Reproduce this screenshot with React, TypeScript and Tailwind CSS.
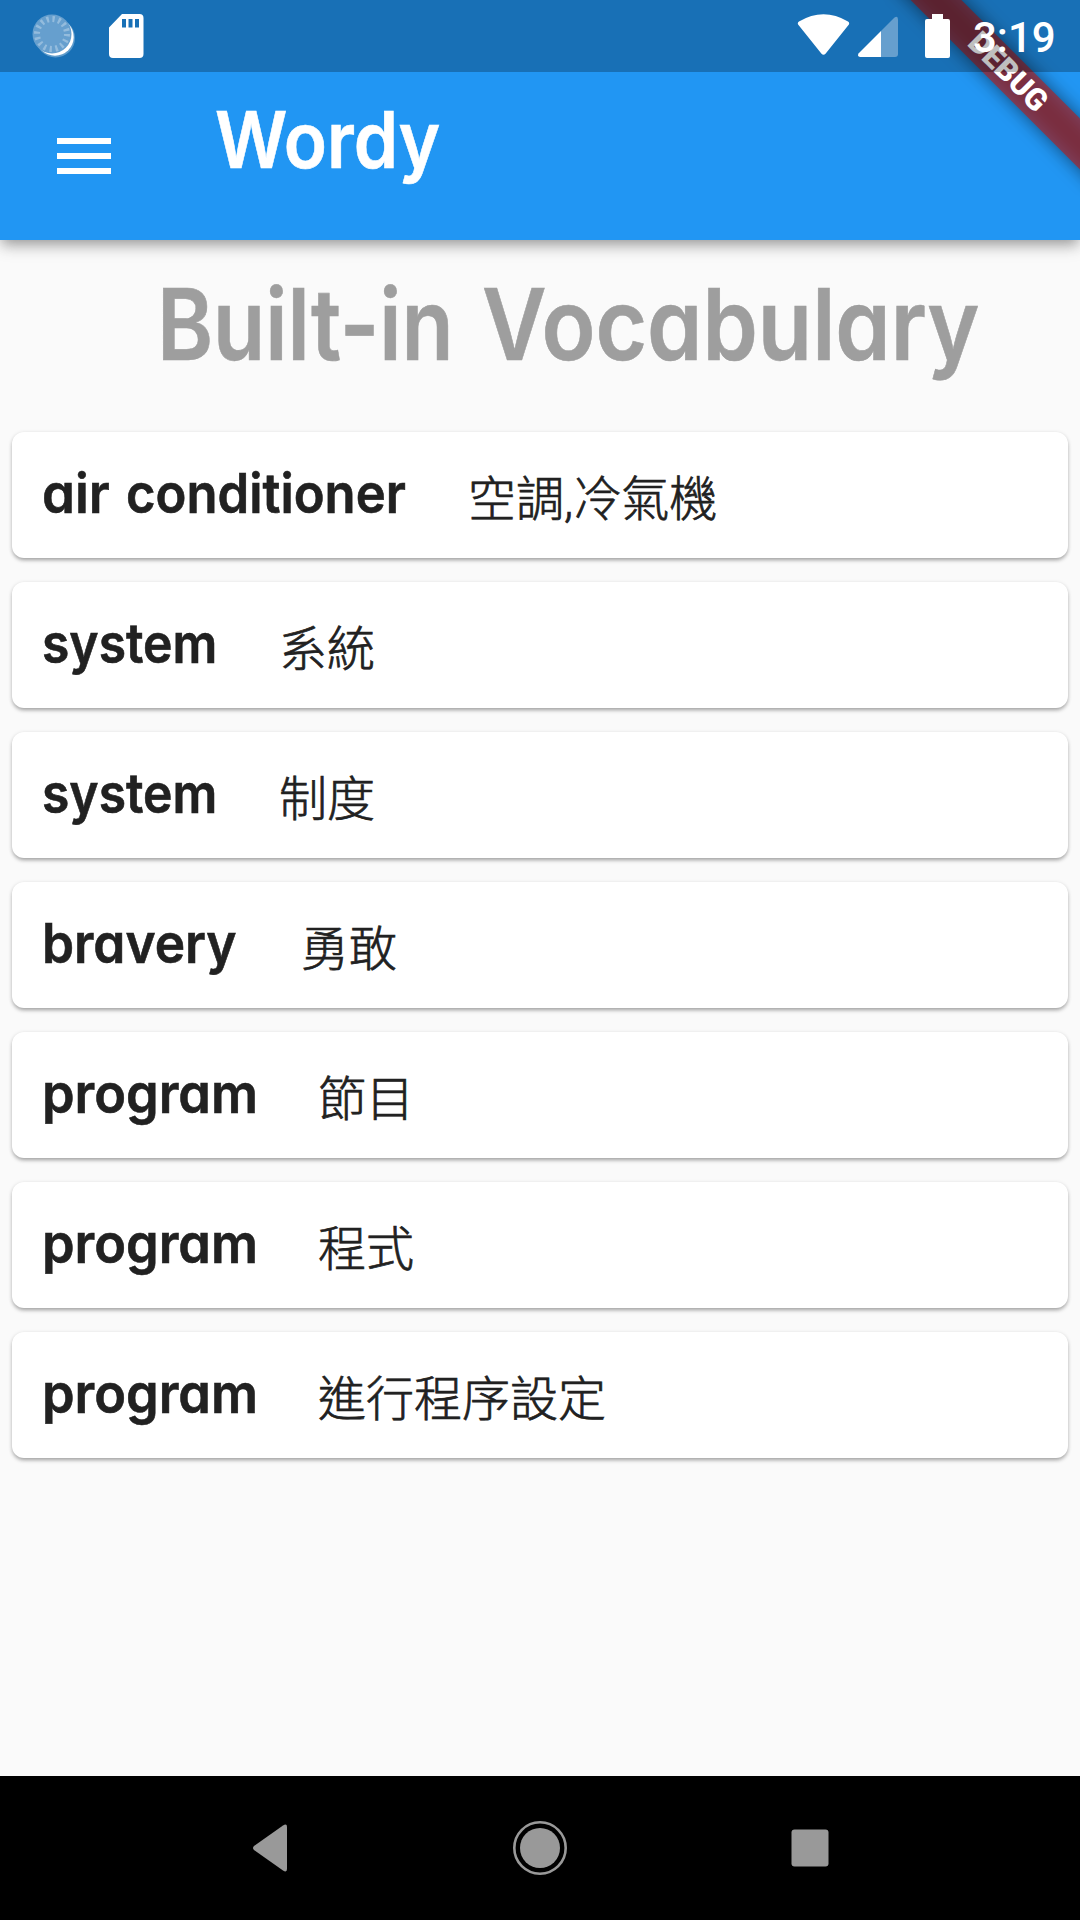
type Part = { text: string; fit: string };
type Entry = { parts: Part[]; meaning: string; box: string };

const system: Part[] = [{ text: "system", fit: "scale-x-[0.905]" }];
const program: Part[] = [{ text: "program", fit: "scale-x-[0.95]" }];

const entries: Entry[] = [
  {
    parts: [
      { text: "air", fit: "w-[84px] scale-x-[0.96]" },
      { text: "conditioner", fit: "scale-x-[0.923]" },
    ],
    meaning: "空調,冷氣機",
    box: "w-[426px]",
  },
  { parts: system, meaning: "系統", box: "w-[237px]" },
  { parts: system, meaning: "制度", box: "w-[237px]" },
  { parts: [{ text: "bravery", fit: "scale-x-[0.935]" }], meaning: "勇敢", box: "w-[259px]" },
  { parts: program, meaning: "節目", box: "w-[276px]" },
  { parts: program, meaning: "程式", box: "w-[276px]" },
  { parts: program, meaning: "進行程序設定", box: "w-[276px]" },
];

const rounded =
  "font-['Inter','Liberation_Sans',sans-serif] font-semibold [font-feature-settings:'cv11','ss03'] [-webkit-text-stroke:0.6px_currentColor] whitespace-nowrap";

function StatusBar() {
  return (
    <div className="relative z-20 flex h-[72px] bg-black/25">
      <svg className="h-[72px] w-[160px]" viewBox="0 0 160 72">
        <circle cx="55.5" cy="38" r="19.5" fill="#fff" opacity=".3" />
        <circle cx="55" cy="37" r="18.7" fill="#fff" />
        <circle cx="52" cy="34" r="19.500" fill="#669fce" />
        <circle cx="52" cy="34" r="15" fill="none" stroke="#94bcdd" strokeWidth="6" strokeDasharray="2.3 3.59" />
        <path
          fillRule="evenodd"
          fill="#fff"
          d="M122 14h17.500a4 4 0 0 1 4 4v36a4 4 0 0 1-4 4H113a4 4 0 0 1-4-4V27.500zM122 19v8.500h4V19zM128.500 19v8.500h4V19zM135 19v8.500h4V19z"
        />
      </svg>
      <div className="flex-1" />
      <svg className="h-[72px] w-[160px]" viewBox="790 0 160 72">
        <path fill="#fff" d="M798.500 25C797.500 24 797.500 22.500 799 21.500Q823.500 7 848 21.500C849.500 22.500 849.500 24 848.500 25L825.500 53.700Q823.500 56 821.500 53.700Z" />
        <path fill="#669fce" d="M881 31L894.500 17.500Q898 15.500 898 19.500V54Q898 57 895 57H881Z" />
        <path fill="#fff" d="M881 31V57H860Q857 56.500 858.500 53.500Z" />
        <path fill="#fff" d="M932 14h11v5h5q2 0 2 2v35q0 2-2 2h-21q-2 0-2-2V21q0-2 2-2h5z" />
      </svg>
      <div className="w-[130px] pl-[23px] pt-[13px] font-['Roboto',sans-serif] text-[42px] leading-[50px] font-medium whitespace-nowrap text-white">
        3:19
      </div>
    </div>
  );
}

function DebugBanner() {
  return (
    <div className="absolute inset-0 z-10 overflow-hidden">
      <div className="absolute top-[54px] left-[858px] h-9 w-[300px] rotate-45 bg-black/50 blur-[9px]" />
      <div className="absolute top-[54px] left-[858px] flex h-9 w-[300px] rotate-45 items-center justify-center bg-[#b71c1c]/63">
        <span className="font-['Roboto',sans-serif] text-[30.6px] leading-9 font-black text-white">DEBUG</span>
      </div>
    </div>
  );
}

function AppBar() {
  return (
    <header className="relative h-60 shrink-0 bg-[#2196f3] shadow-[0_6px_12px_-3px_rgba(0,0,0,0.25),0_6px_16px_0_rgba(0,0,0,0.2)]">
      <StatusBar />
      <div className="flex h-[168px]">
        <div className="flex w-[215px] flex-col gap-[9px] pt-[66px] pl-[57px]">
          <div className="h-1.5 w-[54px] bg-white" />
          <div className="h-1.5 w-[54px] bg-white" />
          <div className="h-1.5 w-[54px] bg-white" />
        </div>
        <h1 className={`${rounded} origin-left scale-x-[0.91] pt-[20px] text-[78px] leading-[96px] text-white`}>Wordy</h1>
      </div>
      <DebugBanner />
    </header>
  );
}

function WordCard({ entry }: { entry: Entry }) {
  return (
    <li className="flex h-[126px] rounded-xl bg-white pl-[30px] text-[#212121] shadow-[0_3px_4px_-1px_rgba(0,0,0,0.3),0_1px_4px_0_rgba(0,0,0,0.14)]">
      <div className={`${rounded} ${entry.box} flex pt-[28px] text-[55px] leading-[66px]`}>
        {entry.parts.map((part) => (
          <span key={part.text} className={`${part.fit} block origin-left`}>
            {part.text}
          </span>
        ))}
      </div>
      <span className="pt-[33px] font-['Roboto','Noto_Sans_CJK_TC',sans-serif] text-[48px] leading-[70px] font-light [-webkit-text-stroke:0.7px_currentColor] whitespace-nowrap">
        {entry.meaning}
      </span>
    </li>
  );
}

function NavBar() {
  return (
    <nav className="flex h-36 shrink-0 items-center bg-black">
      <svg className="h-36 w-full" viewBox="0 0 1080 144" fill="#999">
        <path d="M254 70L283 49.500Q287 47 287 51V93Q287 97 283 94.500L254 74Q252 72 254 70Z" />
        <circle cx="540" cy="72" r="20" />
        <circle cx="540" cy="72" r="25.700" fill="none" stroke="#999" strokeWidth="2.600" />
        <rect x="791.500" y="53.500" width="37" height="37" rx="3" />
      </svg>
    </nav>
  );
}

export default function App() {
  return (
    <div className="flex h-[1920px] w-[1080px] flex-col overflow-hidden bg-[#fafafa]">
      <AppBar />
      <main className="flex flex-1 flex-col">
        <h2 className={`${rounded} flex h-48 pt-[24px] pl-[157px] text-[99px] leading-[120px] text-[#9e9e9e]`}>
          <span className="block w-[325px] origin-left scale-x-[0.86]">Built-in</span>
          <span className="block origin-left scale-x-[0.896]">Vocabulary</span>
        </h2>
        <ul className="flex flex-col gap-6 px-3">
          {entries.map((entry, i) => (
            <WordCard key={i} entry={entry} />
          ))}
        </ul>
      </main>
      <NavBar />
    </div>
  );
}
